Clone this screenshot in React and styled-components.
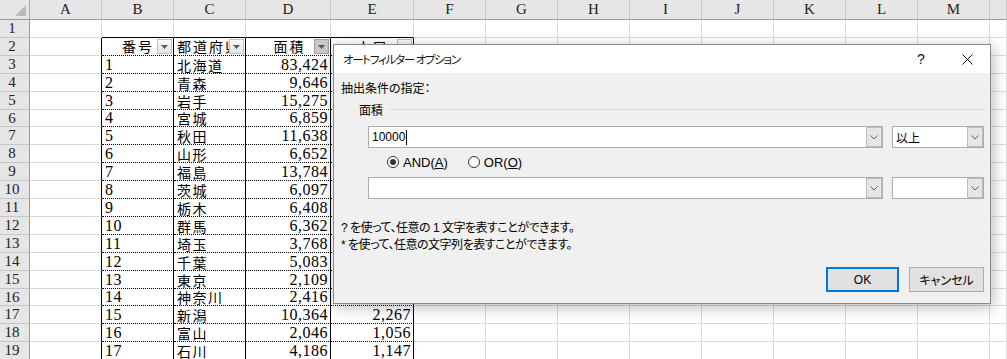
import styled, { createGlobalStyle } from 'styled-components';

const GlobalStyle = createGlobalStyle`
  html, body { margin: 0; padding: 0; background: #fff; }
  body { width: 1007px; height: 359px; overflow: hidden; }
`;

const COLS = ['A', 'B', 'C', 'D', 'E', 'F', 'G', 'H', 'I', 'J', 'K', 'L', 'M', ''];
const ROW_TOPS = Array.from({ length: 21 }, (_, i) => Math.round(20 + i * 17.9));
const ROW_HEIGHTS = ROW_TOPS.slice(1).map((t, i) => t - ROW_TOPS[i]);

// population column is hidden behind the dialog until 新潟
const DATA = [
  [1, '北海道', '83,424', ''],
  [2, '青森', '9,646', ''],
  [3, '岩手', '15,275', ''],
  [4, '宮城', '6,859', ''],
  [5, '秋田', '11,638', ''],
  [6, '山形', '6,652', ''],
  [7, '福島', '13,784', ''],
  [8, '茨城', '6,097', ''],
  [9, '栃木', '6,408', ''],
  [10, '群馬', '6,362', ''],
  [11, '埼玉', '3,768', ''],
  [12, '千葉', '5,083', ''],
  [13, '東京', '2,109', ''],
  [14, '神奈川', '2,416', ''],
  [15, '新潟', '10,364', '2,267'],
  [16, '富山', '2,046', '1,056'],
  [17, '石川', '4,186', '1,147'],
];

const Sheet = styled.div`
  position: relative;
  width: 1007px;
  height: 359px;
  overflow: hidden;
  display: grid;
  grid-template-columns: 30px 72px 72px 72px 85px 83px repeat(8, 72px) 1fr;
  grid-template-rows: 20px ${ROW_HEIGHTS.map((h) => `${h}px`).join(' ')};
  background: #fff;
`;

const Corner = styled.div`
  position: relative;
  box-sizing: border-box;
  background: #e6e6e6;
  border-right: 1px solid #ababab;
  border-bottom: 1px solid #9b9b9b;
  &::after {
    content: '';
    position: absolute;
    right: 3px;
    bottom: 3px;
    border-left: 11px solid transparent;
    border-bottom: 11px solid #b9b9b9;
  }
`;

const ColHead = styled.div`
  box-sizing: border-box;
  background: #e6e6e6;
  border-right: 1px solid #c6c6c6;
  border-bottom: 1px solid #9b9b9b;
  display: flex;
  align-items: center;
  justify-content: center;
  font-family: 'Liberation Serif', serif;
  font-size: 15px;
  color: #222;
`;

const RowHead = styled.div`
  box-sizing: border-box;
  background: #e6e6e6;
  border-right: 1px solid #9b9b9b;
  border-bottom: 1px solid #c6c6c6;
  display: flex;
  align-items: center;
  justify-content: center;
  padding-right: 5px;
  font-family: 'Liberation Serif', serif;
  font-size: 15px;
  color: #222;
`;

const lines = {
  grid: '1px solid #dadada',
  black: '1px solid #000',
  dot: '1px dotted #000',
};

const Cell = styled.div`
  box-sizing: border-box;
  min-width: 0;
  border-right: ${(p) => lines[p.$right || 'grid']};
  border-bottom: ${(p) => lines[p.$bottom || 'grid']};
  display: flex;
  align-items: center;
  justify-content: ${(p) => p.$align || 'flex-start'};
  padding: 0 ${(p) => (p.$align === 'flex-end' ? '2px' : '3px')};
  overflow: hidden;
  white-space: nowrap;
  color: #000;
`;

const Kanji = styled.span`
  font-family: 'Noto Sans CJK JP', sans-serif;
  font-size: 14px;
  letter-spacing: 1.5px;
  line-height: 16px;
`;

const Num = styled.span`
  font-family: 'Liberation Serif', serif;
  font-size: 16px;
  letter-spacing: 0.5px;
  line-height: 16px;
`;

const HeadLabel = styled.span`
  flex: 1;
  min-width: 0;
  overflow: ${(p) => (p.$clip ? 'hidden' : 'visible')};
  text-align: ${(p) => p.$align || 'left'};
  padding: 0 ${(p) => p.$padR || 0}px 0 ${(p) => p.$padL || 0}px;
  font-family: 'Noto Sans CJK JP', sans-serif;
  font-size: 14px;
  letter-spacing: 2px;
  line-height: 17px;
`;

const FilterButton = styled.span`
  flex: none;
  box-sizing: border-box;
  width: 15px;
  height: 15px;
  margin-right: -2px;
  border: 1px solid ${(p) => (p.$active ? '#a0a0a0' : '#c0c0c0')};
  background: ${(p) => (p.$active ? '#c8c8c8' : 'linear-gradient(#fbfbfb, #e4e4e4)')};
  display: flex;
  align-items: center;
  justify-content: center;
`;

const Arrow = () => (
  <svg width="7" height="4" viewBox="0 0 7 4">
    <polygon points="0,0 7,0 3.5,4" fill="#5a5a5a" />
  </svg>
);

const Dialog = styled.div`
  position: absolute;
  left: 333px;
  top: 44px;
  width: 658px;
  height: 260px;
  box-sizing: border-box;
  border: 1px solid #8a8a8a;
  background: #f0f0f0;
  box-shadow: 2px 3px 14px rgba(0, 0, 0, 0.28);
  display: flex;
  flex-direction: column;
  font-family: 'Liberation Sans', 'Noto Sans CJK JP', sans-serif;
  font-feature-settings: 'palt';
  font-size: 12px;
  color: #000;
`;

const TitleBar = styled.div`
  height: 28px;
  background: #fff;
  display: flex;
  align-items: center;
`;

const Title = styled.div`
  flex: 1;
  padding-left: 9px;
  font-size: 11.5px;
  letter-spacing: -1.3px;
  color: #111;
`;

const TitleButton = styled.div`
  width: 46px;
  height: 28px;
  display: flex;
  align-items: center;
  justify-content: center;
  font-family: 'Liberation Sans', sans-serif;
  font-size: 14px;
  color: #111;
`;

const Body = styled.div`
  flex: 1;
  display: flex;
  flex-direction: column;
  padding: 8px 6px 0 7px;
`;

const Line = styled.div`
  height: 17px;
  line-height: 17px;
  white-space: nowrap;
  letter-spacing: ${(p) => (p.$tight ? '-0.5px' : '0')};
`;

const Group = styled.div`
  display: flex;
  align-items: center;
  height: 17px;
  margin-top: 3px;
  padding-left: 18px;
`;

const GroupRule = styled.div`
  flex: 1;
  height: 1px;
  margin-left: 6px;
  background: #dcdcdc;
`;

const Criteria = styled.div`
  display: flex;
  flex-direction: column;
  padding-left: 27px;
  margin-top: 8px;
`;

const ComboRow = styled.div`
  display: flex;
  gap: 9px;
  margin-top: ${(p) => p.$gap || 0}px;
`;

const Combo = styled.div`
  box-sizing: border-box;
  width: ${(p) => p.$w}px;
  height: 22px;
  border: 1px solid #adadad;
  background: #fff;
  display: flex;
  align-items: stretch;
`;

const ComboText = styled.div`
  flex: 1;
  display: flex;
  align-items: center;
  padding-left: 3px;
  font-size: 12px;
`;

const Caret = styled.span`
  display: inline-block;
  width: 1px;
  height: 15px;
  margin-left: 1px;
  background: #000;
`;

const DropButton = styled.div`
  width: 16px;
  background: #e6e6e6;
  box-shadow: inset 0 0 0 1px #bcbcbc;
  display: flex;
  align-items: center;
  justify-content: center;
`;

const Chevron = () => (
  <svg width="8" height="5" viewBox="0 0 8 5">
    <polyline points="0.5,0.5 4,4 7.5,0.5" fill="none" stroke="#606060" strokeWidth="1" />
  </svg>
);

const RadioRow = styled.div`
  display: flex;
  align-items: center;
  height: 16px;
  margin-top: 6px;
  padding-left: 19px;
  gap: 20px;
`;

const RadioItem = styled.label`
  display: flex;
  align-items: center;
  gap: 4px;
  font-size: 13px;
`;

const RadioDot = styled.span`
  box-sizing: border-box;
  width: 12px;
  height: 12px;
  border-radius: 50%;
  border: 1px solid #333;
  background: #fff;
  display: flex;
  align-items: center;
  justify-content: center;
  &::after {
    content: '';
    width: 6px;
    height: 6px;
    border-radius: 50%;
    background: ${(p) => (p.$checked ? '#333' : 'transparent')};
  }
`;

const Help = styled.div`
  margin-top: 21px;
`;

const Buttons = styled.div`
  display: flex;
  justify-content: flex-end;
  gap: 10px;
  margin-top: 13px;
`;

const Button = styled.div`
  box-sizing: border-box;
  width: ${(p) => p.$w}px;
  height: 25px;
  background: #e1e1e1;
  border: ${(p) => (p.$default ? '2px solid #0078d7' : '1px solid #adadad')};
  display: flex;
  align-items: center;
  justify-content: center;
  font-size: 12px;
`;

const bodyCell = (row, col) => {
  if (col === 0) return <Cell key={col} $right="black" />;
  const bottom = row === 17 ? 'black' : 'dot';
  if (col > 4) return <Cell key={col} />;
  const d = DATA[row - 1];
  if (col === 1) return <Cell key={col} $right="black" $bottom={bottom}><Num>{d[0]}</Num></Cell>;
  if (col === 2) return <Cell key={col} $right="black" $bottom={bottom}><Kanji>{d[1]}</Kanji></Cell>;
  const value = col === 3 ? d[2] : d[3];
  return (
    <Cell key={col} $right="black" $bottom={bottom} $align="flex-end">
      {value && <Num>{value}</Num>}
    </Cell>
  );
};

const headerRow = () => [
  <Cell key="a" $right="black" />,
  <Cell key="b" $right="black" $bottom="dot">
    <HeadLabel $align="right" $padR={3}>番号</HeadLabel>
    <FilterButton><Arrow /></FilterButton>
  </Cell>,
  <Cell key="c" $right="black" $bottom="dot">
    <HeadLabel $clip>都道府県</HeadLabel>
    <FilterButton><Arrow /></FilterButton>
  </Cell>,
  <Cell key="d" $right="black" $bottom="dot">
    <HeadLabel $align="center" $padL={16}>面積</HeadLabel>
    <FilterButton $active><Arrow /></FilterButton>
  </Cell>,
  <Cell key="e" $right="black" $bottom="dot">
    <HeadLabel $align="center" $padL={14}>人口</HeadLabel>
    <FilterButton><Arrow /></FilterButton>
  </Cell>,
  ...COLS.slice(5).map((c, i) => <Cell key={`x${i}`} />),
];

export default function App() {
  return (
    <>
      <GlobalStyle />
      <Sheet>
        <Corner />
        {COLS.map((c, i) => (
          <ColHead key={`h${i}`}>{c}</ColHead>
        ))}
        {ROW_HEIGHTS.map((_, r) => {
          const rowNo = r + 1;
          let cells;
          if (rowNo === 1) {
            cells = COLS.map((c, i) => (
              <Cell key={i} $bottom={i >= 1 && i <= 4 ? 'black' : 'grid'} />
            ));
          } else if (rowNo === 2) {
            cells = headerRow();
          } else if (rowNo <= 19) {
            cells = COLS.map((c, i) => bodyCell(rowNo - 2, i));
          } else {
            cells = COLS.map((c, i) => <Cell key={i} $right={i <= 4 ? 'black' : 'grid'} />);
          }
          return [<RowHead key={`r${rowNo}`}>{rowNo}</RowHead>, ...cells];
        })}

        <Dialog>
          <TitleBar>
            <Title>オートフィルター オプション</Title>
            <TitleButton>?</TitleButton>
            <TitleButton>
              <svg width="11" height="11" viewBox="0 0 11 11">
                <path d="M0.5 0.5 L10.5 10.5 M10.5 0.5 L0.5 10.5" stroke="#111" strokeWidth="1" />
              </svg>
            </TitleButton>
          </TitleBar>
          <Body>
            <Line>抽出条件の指定：</Line>
            <Group>
              <span>面積</span>
              <GroupRule />
            </Group>
            <Criteria>
              <ComboRow>
                <Combo $w={515}>
                  <ComboText>10000<Caret /></ComboText>
                  <DropButton><Chevron /></DropButton>
                </Combo>
                <Combo $w={92}>
                  <ComboText>以上</ComboText>
                  <DropButton><Chevron /></DropButton>
                </Combo>
              </ComboRow>
              <RadioRow>
                <RadioItem>
                  <RadioDot $checked />
                  <span>AND(<u>A</u>)</span>
                </RadioItem>
                <RadioItem>
                  <RadioDot />
                  <span>OR(<u>O</u>)</span>
                </RadioItem>
              </RadioRow>
              <ComboRow $gap={7}>
                <Combo $w={515}>
                  <ComboText />
                  <DropButton><Chevron /></DropButton>
                </Combo>
                <Combo $w={92}>
                  <ComboText />
                  <DropButton><Chevron /></DropButton>
                </Combo>
              </ComboRow>
            </Criteria>
            <Help>
              <Line $tight>? を使って、任意の 1 文字を表すことができます。</Line>
              <Line $tight>* を使って、任意の文字列を表すことができます。</Line>
            </Help>
            <Buttons>
              <Button $w={73} $default>OK</Button>
              <Button $w={75}>キャンセル</Button>
            </Buttons>
          </Body>
        </Dialog>
      </Sheet>
    </>
  );
}
